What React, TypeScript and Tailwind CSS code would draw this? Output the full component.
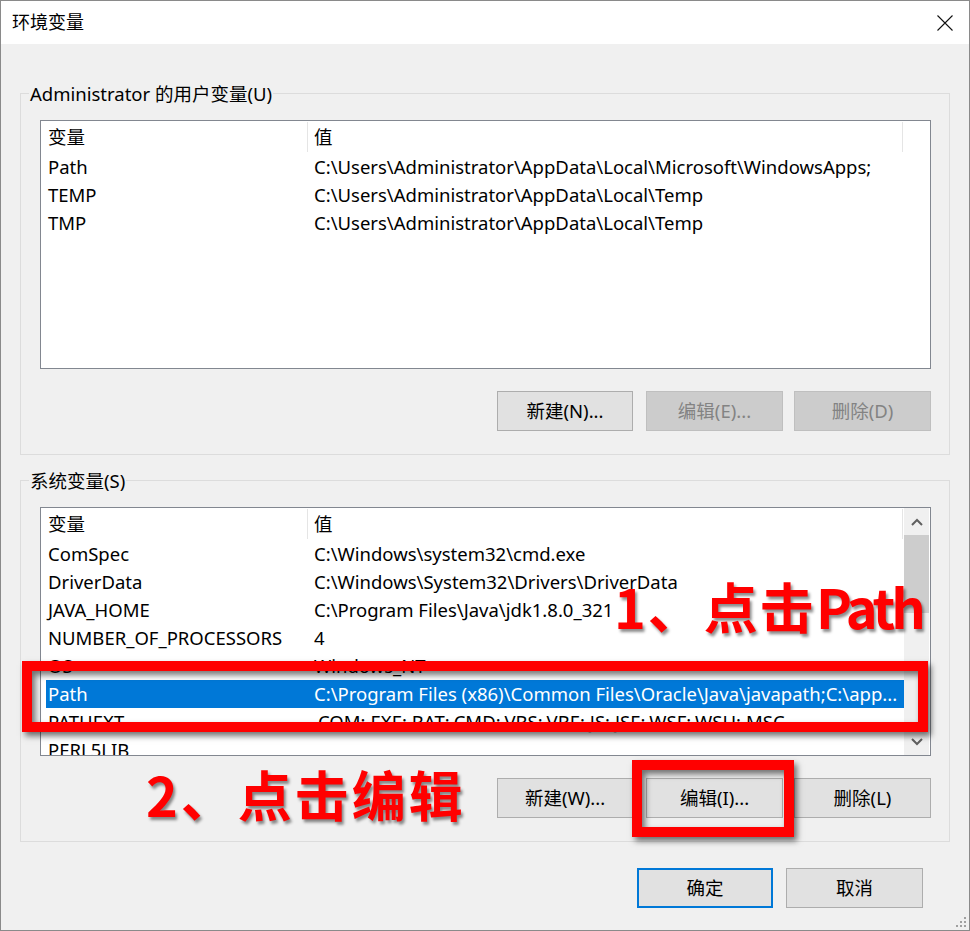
import React from 'react'

const userVars: Array<[string, string]> = [
  ['Path', 'C:\\Users\\Administrator\\AppData\\Local\\Microsoft\\WindowsApps;'],
  ['TEMP', 'C:\\Users\\Administrator\\AppData\\Local\\Temp'],
  ['TMP', 'C:\\Users\\Administrator\\AppData\\Local\\Temp'],
]

const sysVars: Array<[string, string]> = [
  ['ComSpec', 'C:\\Windows\\system32\\cmd.exe'],
  ['DriverData', 'C:\\Windows\\System32\\Drivers\\DriverData'],
  ['JAVA_HOME', 'C:\\Program Files\\Java\\jdk1.8.0_321'],
  ['NUMBER_OF_PROCESSORS', '4'],
  ['OS', 'Windows_NT'],
  ['Path', 'C:\\Program Files (x86)\\Common Files\\Oracle\\Java\\javapath;C:\\app...'],
  ['PATHEXT', '.COM;.EXE;.BAT;.CMD;.VBS;.VBE;.JS;.JSE;.WSF;.WSH;.MSC'],
  ['PERL5LIB', ''],
]

function WinButton({ label, disabled, primary, className = '' }: { label: string; disabled?: boolean; primary?: boolean; className?: string }) {
  const base = 'flex h-[40px] items-center justify-center'
  if (disabled) {
    return <div className={`${base} border border-[#bfbfbf] bg-[#cccccc] text-[#838383] ${className}`}>{label}</div>
  }
  if (primary) {
    return <div className={`${base} border-2 border-[#0078d7] bg-[#e1e1e1] text-black ${className}`}>{label}</div>
  }
  return <div className={`${base} border border-[#adadad] bg-[#e1e1e1] text-black ${className}`}>{label}</div>
}

function ListHeader() {
  return (
    <div className="ml-[5px] flex h-[32px] shrink-0">
      <div className="flex w-[261px] items-center pl-[2px]">变量</div>
      <div className="mt-[1px] h-[30px] w-px bg-[#e5e5e5]" />
      <div className="flex w-[594px] items-center pl-[6px]">值</div>
      <div className="mt-[1px] h-[30px] w-px bg-[#e5e5e5]" />
    </div>
  )
}

function VarRow({ name, value, selected }: { name: string; value: string; selected?: boolean }) {
  return (
    <div className={`ml-[5px] flex h-[28px] w-[858px] shrink-0 items-center whitespace-nowrap ${selected ? 'bg-[#0078d7] text-white' : ''}`}>
      <div className="w-[261px] pl-[2px]">{name}</div>
      <div className="min-w-0 flex-1 overflow-hidden pl-[7px]">{value}</div>
    </div>
  )
}

function Chevron({ up }: { up?: boolean }) {
  return (
    <svg width="12" height="8" viewBox="0 0 12 8">
      <path d={up ? 'M1 7 L6 2 L11 7' : 'M1 1 L6 6 L11 1'} fill="none" stroke="#606060" strokeWidth="2" />
    </svg>
  )
}

export default function App() {
  return (
    <div
      className="relative flex h-[931px] w-[970px] flex-col overflow-hidden border border-[#8a8a8a] bg-[#f0f0f0] text-[18.5px] text-black"
      style={{ fontFamily: '"Noto Sans", "Noto Sans CJK SC", sans-serif' }}
    >
      {/* title bar */}
      <div className="flex h-[43px] shrink-0 items-center justify-between bg-white pl-[11px] pr-[16px]">
        <span className="text-[18px]">环境变量</span>
        <svg width="16" height="16" viewBox="0 0 16 16">
          <path d="M0.5 0.5 L15.5 15.5 M15.5 0.5 L0.5 15.5" stroke="#111" strokeWidth="1.1" />
        </svg>
      </div>

      <div className="flex flex-col px-[19px] pt-[49px]">
        {/* user variables */}
        <div className="relative border border-[#dcdcdc] pb-[23px] pl-[19px] pr-[18px] pt-[26px]">
          <span className="absolute left-[8px] top-[-12px] bg-[#f0f0f0] px-[1px] leading-[24px]">Administrator 的用户变量(U)</span>
          <div className="flex h-[249px] flex-col border border-[#828790] bg-white">
            <ListHeader />
            {userVars.map(([n, v]) => (
              <VarRow key={n} name={n} value={v} />
            ))}
          </div>
          <div className="mt-[22px] flex justify-end">
            <WinButton label="新建(N)..." className="w-[136px]" />
            <WinButton label="编辑(E)..." disabled className="ml-[13px] w-[137px]" />
            <WinButton label="删除(D)" disabled className="ml-[11px] w-[137px]" />
          </div>
        </div>

        {/* system variables */}
        <div className="relative mt-[25px] border border-[#dcdcdc] pb-[23px] pl-[19px] pr-[18px] pt-[26px]">
          <span className="absolute left-[8px] top-[-12px] bg-[#f0f0f0] px-[1px] leading-[24px]">系统变量(S)</span>
          <div className="flex h-[249px] border border-[#828790] bg-white">
            <div className="flex w-[863px] flex-col overflow-hidden">
              <ListHeader />
              {sysVars.map(([n, v]) => (
                <VarRow key={n} name={n} value={v} selected={n === 'Path'} />
              ))}
            </div>
            <div className="mr-[1px] flex w-[25px] flex-col bg-[#f0f0f0]">
              <div className="flex h-[27px] items-center justify-center">
                <Chevron up />
              </div>
              <div className="h-[78px] bg-[#cdcdcd]" />
              <div className="flex-1" />
              <div className="flex h-[27px] items-center justify-center">
                <Chevron />
              </div>
            </div>
          </div>
          <div className="mt-[22px] flex justify-end">
            <WinButton label="新建(W)..." className="w-[136px]" />
            <WinButton label="编辑(I)..." className="ml-[13px] w-[137px]" />
            <WinButton label="删除(L)" className="ml-[11px] w-[137px]" />
          </div>
        </div>

        <div className="mt-[26px] flex justify-end pr-[27px]">
          <WinButton label="确定" primary className="w-[136px]" />
          <WinButton label="取消" className="ml-[13px] w-[137px]" />
        </div>
      </div>

      {/* resize grip */}
      <svg className="absolute bottom-[2px] right-[2px]" width="12" height="12" viewBox="0 0 12 12">
        {[[10, 2], [10, 6], [6, 6], [10, 10], [6, 10], [2, 10]].map(([x, y]) => (
          <rect key={`${x}-${y}`} x={x - 1} y={y - 1} width="2" height="2" fill="#a0a0a0" />
        ))}
      </svg>

      {/* annotations */}
      <div className="pointer-events-none absolute left-[21px] top-[660px] h-[71px] w-[906px] border-[10px] border-[#ff0000] shadow-[3px_4px_6px_rgba(0,0,0,0.55),inset_3px_4px_6px_rgba(0,0,0,0.55)]" />
      <div className="pointer-events-none absolute left-[631px] top-[759px] h-[77px] w-[162px] border-[10px] border-[#ff0000] shadow-[3px_4px_6px_rgba(0,0,0,0.55),inset_3px_4px_6px_rgba(0,0,0,0.55)]" />
      <div
        className="pointer-events-none absolute left-[613px] top-[569px] whitespace-nowrap text-[54px] font-bold leading-[72px] tracking-[2px] text-[#ff0000] [text-shadow:2px_3px_3px_rgba(0,0,0,0.45)]"
        style={{ fontFamily: '"Noto Sans CJK SC", sans-serif' }}
      >
        1、点击<span className="tracking-[-4px]">Path</span>
      </div>
      <div
        className="pointer-events-none absolute left-[145px] top-[757px] whitespace-nowrap text-[54px] font-bold leading-[72px] tracking-[3px] text-[#ff0000] [text-shadow:2px_3px_3px_rgba(0,0,0,0.45)]"
        style={{ fontFamily: '"Noto Sans CJK SC", sans-serif' }}
      >
        2、点击编辑
      </div>
    </div>
  )
}
